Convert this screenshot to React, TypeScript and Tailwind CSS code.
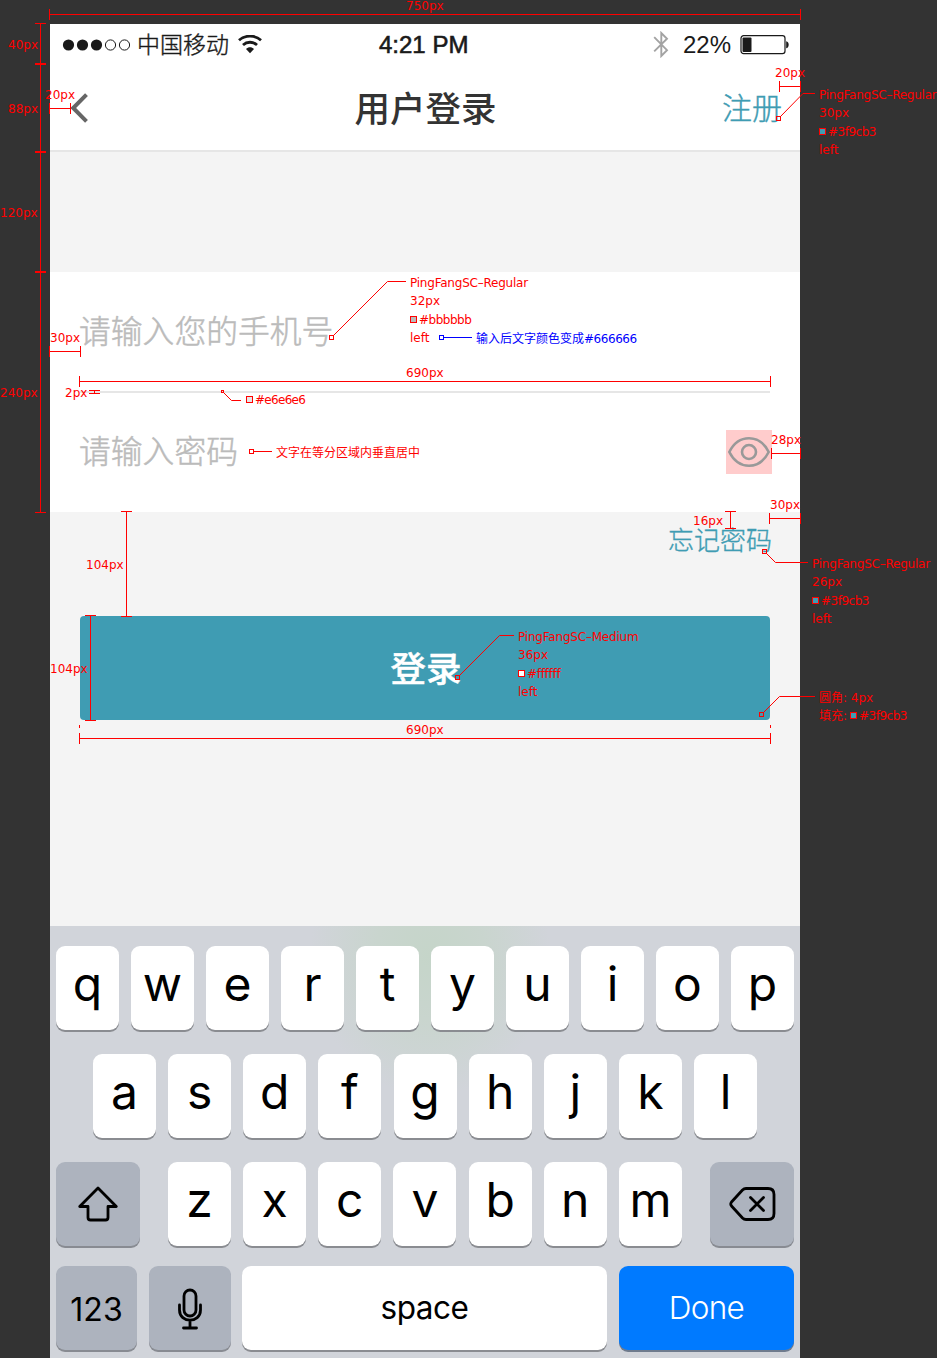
import React from "react";

const SANS = "font-['Inter','Noto_Sans_CJK_SC',sans-serif]";
const CJK = "font-['Noto_Sans_CJK_SC',sans-serif]";
const ARIAL = "font-['Liberation_Sans',Arial,sans-serif]";

function StatusBar() {
  return (
    <div className="flex h-10 items-center pl-[12px] pr-[10px] text-[#1a1a1a]">
      <div className="flex w-[300px] items-center">
        <svg className="mt-px h-[14px] w-[70px] shrink-0" viewBox="0 0 70 14">
          <circle cx="6.5" cy="7" r="5.6" fill="#1a1a1a" />
          <circle cx="20.5" cy="7" r="5.6" fill="#1a1a1a" />
          <circle cx="34.5" cy="7" r="5.6" fill="#1a1a1a" />
          <circle cx="48.5" cy="7" r="5.1" fill="none" stroke="#1a1a1a" />
          <circle cx="62.5" cy="7" r="5.1" fill="none" stroke="#1a1a1a" />
        </svg>
        <span className={`${CJK} -mt-[3px] ml-[5px] whitespace-nowrap text-[23px] font-light leading-10 [-webkit-text-stroke:0.4px_#1a1a1a]`}>
          中国移动
        </span>
        <svg className="ml-[9px] h-[19px] w-[24px] shrink-0" viewBox="0 0 24 19" fill="none" stroke="#1a1a1a">
          <path d="M1 5.2C7 -.2 17 -.2 23 5.2" strokeWidth="2.8" />
          <path d="M5 10c4-3.700 10-3.700 14 0" strokeWidth="2.8" />
          <path d="M8 14c2.3-2.2 5.7-2.2 8 0L12 18.2z" fill="#1a1a1a" stroke="none" />
        </svg>
      </div>
      <span className={`${ARIAL} ml-[17px] mt-px w-[90px] whitespace-nowrap text-[24px] leading-10 [-webkit-text-stroke:0.6px_#1a1a1a]`}>
        4:21 PM
      </span>
      <div className="ml-auto flex items-center">
        <svg className="h-[27px] w-[16px]" viewBox="0 0 16 27" fill="none" stroke="#a3a3a3" strokeWidth="1.9">
          <path d="M1.2 6.2 14 19.2 8.3 25V2L14 7.8 1.2 20.4" />
        </svg>
        <span className={`${ARIAL} ml-[14px] mt-px w-[48px] text-[24px] leading-10`}>22%</span>
        <svg className="ml-[9px] mt-px h-[20px] w-[50px]" viewBox="0 0 50 20">
          <rect x="1" y=".7" width="44" height="18" rx="2.6" fill="none" stroke="#1a1a1a" strokeWidth="1.2" />
          <rect x="2.5" y="2.5" width="9" height="14.5" rx="1" fill="#1a1a1a" />
          <path d="M46.2 6.2c3.3.5 3.3 6.600 0 7.100z" fill="#1a1a1a" />
        </svg>
      </div>
    </div>
  );
}

function NavBar() {
  return (
    <div className={`${CJK} grid h-[88px] grid-cols-3 items-center border-b-2 border-[#e6e6e6] pl-5 pr-[18px]`}>
      <svg className="mt-px h-[30px] w-[19px]" viewBox="0 0 19 30" fill="none" stroke="#666" strokeWidth="4">
        <path d="M16.500 1.600 3.200 15 16.500 28.400" />
      </svg>
      <h1 className="-ml-px whitespace-nowrap text-center text-[35.5px] font-medium leading-none text-[#333]">用户登录</h1>
      <a className="-mt-[2px] text-right text-[30px] font-light leading-none text-[#3f9cb3] [-webkit-text-stroke:0.4px_#3f9cb3]">注册</a>
    </div>
  );
}

function LoginForm() {
  return (
    <div className={`${CJK} h-[240px] bg-white px-[30px] text-[31.8px] font-light text-[#bbb] [-webkit-text-stroke:0.5px_#bbb]`}>
      <div className="flex h-[121px] items-center border-b-2 border-[#e6e6e6] pb-[4px]">
        <span className="-ml-px">请输入您的手机号</span>
      </div>
      <div className="-mr-[2px] flex h-[119px] items-center justify-between">
        <span className="-ml-px -mt-[5px]">请输入密码</span>
        <span className="-mt-px flex h-[44px] w-[46px] items-center justify-center bg-[#fcc]">
          <svg className="h-[32px] w-[44px]" viewBox="0 0 44 32" fill="none" stroke="#999" strokeWidth="2.6" strokeLinejoin="round">
            <path d="M2.300 16C11.500-2.300 32.500-2.300 41.700 16 32.500 34.300 11.500 34.300 2.300 16Z" />
            <circle cx="22" cy="16" r="7" />
          </svg>
        </span>
      </div>
    </div>
  );
}

function LetterKey({ label }: { label: string }) {
  return (
    <div className="flex h-[84px] w-[63px] justify-center rounded-[9px] bg-white text-[48px] font-[380] leading-[75px] text-black shadow-[0_2px_0_#8a8c91]">
      {label}
    </div>
  );
}

const GREY_KEY =
  "flex h-[84px] items-center justify-center rounded-[9px] bg-[#adb3be] text-black shadow-[0_2px_0_#888b92]";

function Keyboard() {
  return (
    <div
      className={`${SANS} h-[432px] overflow-hidden bg-[#d1d4da] bg-[radial-gradient(ellipse_120px_140px_at_380px_30px,#c5d5c9_0%,#c9d5ce_45%,#d1d4da_100%)] px-[6px] pt-5`}
    >
      <div className="flex h-[108px] justify-between">
        {"qwertyuiop".split("").map((k) => (
          <LetterKey key={k} label={k} />
        ))}
      </div>
      <div className="flex h-[108px] justify-between px-[37px]">
        {"asdfghjkl".split("").map((k) => (
          <LetterKey key={k} label={k} />
        ))}
      </div>
      <div className="flex h-[104px] justify-between">
        <div className={`${GREY_KEY} w-[84px]`}>
          <svg className="h-[38px] w-[42px]" viewBox="0 0 42 38" fill="none" stroke="#000" strokeWidth="2.800" strokeLinejoin="round">
            <path d="M21 3 39.300 21.500H31V32.500Q31 35 28.500 35H13.500Q11 35 11 32.500V21.500H2.700Z" />
          </svg>
        </div>
        <div className="flex w-[514px] justify-between">
          {"zxcvbnm".split("").map((k) => (
            <LetterKey key={k} label={k} />
          ))}
        </div>
        <div className={`${GREY_KEY} w-[84px]`}>
          <svg className="h-[36px] w-[48px]" viewBox="0 0 48 36" fill="none" stroke="#000" strokeWidth="2.800" strokeLinejoin="round" strokeLinecap="round">
            <path d="M18 2.500H40Q46 2.500 46 8.500V27.500Q46 33.500 40 33.500H18Q16 33.500 14.500 32L3.500 20Q2 18 3.500 16L14.500 4Q16 2.500 18 2.500Z" />
            <path d="M22.500 11.500 35.500 24.500M35.500 11.500 22.500 24.500" />
          </svg>
        </div>
      </div>
      <div className="flex">
        <div className={`${GREY_KEY} w-[81px] pt-[3px] text-[32px] font-[380]`}>123</div>
        <div className={`${GREY_KEY} ml-3 w-[82px]`}>
          <svg className="mt-px h-[42px] w-[26px]" viewBox="0 0 26 42" fill="none" stroke="#000" strokeWidth="2.800" strokeLinecap="round">
            <rect x="7" y="2" width="12" height="26" rx="6" />
            <path d="M2.500 17v5c0 13.500 21 13.500 21 0v-5M13 33v7M6.500 40h13" />
          </svg>
        </div>
        <div className="ml-[11px] flex h-[84px] w-[365px] items-center justify-center rounded-[9px] bg-white text-[31.500px] font-[380] tracking-[-0.5px] text-black shadow-[0_2px_0_#8a8c91]">
          space
        </div>
        <div className="ml-3 flex h-[84px] w-[175px] items-center justify-center rounded-[9px] bg-[#007aff] text-[31.500px] font-[350] tracking-[-0.7px] text-white shadow-[0_2px_0_#6f7b8d]">
          Done
        </div>
      </div>
    </div>
  );
}

const NOTES: [string, string][] = [
  ["750px", "left-[406px] top-[-1px]"],
  ["40px", "left-[8px] top-[38px]"],
  ["88px", "left-[8px] top-[102px]"],
  ["20px", "left-[45px] top-[88px]"],
  ["120px", "left-0 top-[206px]"],
  ["240px", "left-0 top-[386px]"],
  ["20px", "left-[775px] top-[66px]"],
  ["PingFangSC–Regular", "left-[819px] top-[88px] tracking-[-0.25px]"],
  ["30px", "left-[819px] top-[106px]"],
  ["#3f9cb3", "left-[828px] top-[125px] tracking-[-0.5px]"],
  ["left", "left-[819px] top-[143px]"],
  ["PingFangSC–Regular", "left-[410px] top-[276px] tracking-[-0.22px]"],
  ["32px", "left-[410px] top-[294px]"],
  ["#bbbbbb", "left-[419px] top-[313px] tracking-[-0.5px]"],
  ["left", "left-[410px] top-[331px]"],
  ["30px", "left-[50px] top-[331px]"],
  ["690px", "left-[406px] top-[366px]"],
  ["2px", "left-[65px] top-[386px]"],
  ["#e6e6e6", "left-[255px] top-[393px] tracking-[-0.7px]"],
  ["文字在等分区域内垂直居中", "left-[276px] top-[446px]"],
  ["28px", "left-[771px] top-[433px]"],
  ["30px", "left-[770px] top-[498px]"],
  ["16px", "left-[693px] top-[514px]"],
  ["104px", "left-[86px] top-[558px]"],
  ["104px", "left-[50px] top-[662px]"],
  ["690px", "left-[406px] top-[723px]"],
  ["PingFangSC–Medium", "left-[518px] top-[630px] tracking-[-0.2px]"],
  ["36px", "left-[518px] top-[648px]"],
  ["#ffffff", "left-[527px] top-[667px] tracking-[-0.3px]"],
  ["left", "left-[518px] top-[685px]"],
  ["PingFangSC–Regular", "left-[812px] top-[557px] tracking-[-0.22px]"],
  ["26px", "left-[812px] top-[575px]"],
  ["#3f9cb3", "left-[821px] top-[594px] tracking-[-0.5px]"],
  ["left", "left-[812px] top-[612px]"],
  ["圆角: 4px", "left-[819px] top-[691px]"],
  ["填充:", "left-[819px] top-[709px]"],
  ["#3f9cb3", "left-[859px] top-[709px] tracking-[-0.5px]"],
];

// Horizontal dimension: x1, x2, y
const H_DIMS = [
  [49, 800, 14], [49, 70, 108], [779, 800, 86], [49, 80, 351], [79, 770, 381],
  [771, 800, 453], [769, 800, 518], [79, 770, 738],
];
// Vertical dimension: x, y1, y2
const V_DIMS = [[126, 511, 616], [90, 615, 720], [730, 511, 528], [94, 390, 393]];
// Leader: anchor square x, y, size, then polyline points and colour
const LEADERS: [number, number, number, string, string][] = [
  [776, 116, 5, "781,116 803,93.5 815,93.5", "#f00"],
  [329, 335, 5, "334,335 387.5,281.5 406,281.5", "#f00"],
  [439, 335, 5, "444,337.5 472,337.5", "#00f"],
  [221, 390, 3, "224,393 231.500,400.500 241,400.500", "#f00"],
  [249, 449, 5, "254,451.5 272,451.5", "#f00"],
  [762, 549, 5, "767,554 775.500,562.500 808,562.500", "#f00"],
  [759, 712, 5, "764,712 779.500,696.500 815,696.500", "#f00"],
  [455, 675, 5, "460,675 499.500,635.500 514,635.500", "#f00"],
];
// Colour swatch: x, y, fill
const SWATCHES: [number, number, string][] = [
  [819, 128, "#3f9cb3"], [410, 316, "#bbb"], [246, 396, "#e6e6e6"],
  [518, 670, "#fff"], [812, 597, "#3f9cb3"], [850, 712, "#3f9cb3"],
];

function Annotations() {
  return (
    <div className="pointer-events-none absolute inset-0 overflow-hidden font-['DejaVu_Sans','Noto_Sans_CJK_SC',sans-serif] text-[12px] leading-[14px] text-[#f00]">
      <svg className="absolute inset-0 h-[1358px] w-[937px]" viewBox="0 0 937 1358">
        <g fill="#f00" shapeRendering="crispEdges">
          {H_DIMS.map(([a, b, y]) => (
            <React.Fragment key={`${a}-${y}`}>
              <rect x={a} y={y} width={b - a} height="1" />
              <rect x={a} y={y - 5} width="1" height="11" />
              <rect x={b} y={y - 5} width="1" height="11" />
            </React.Fragment>
          ))}
          {V_DIMS.map(([x, a, b]) => (
            <React.Fragment key={`${x}-${a}`}>
              <rect x={x} y={a} width="1" height={b - a} />
              <rect x={x - 5} y={a} width="11" height="1" />
              <rect x={x - 5} y={b} width="11" height="1" />
            </React.Fragment>
          ))}
          <rect x="40" y="23" width="1" height="489" />
          <rect x="35" y="23" width="11" height="1" />
          <rect x="35" y="63" width="11" height="2" />
          <rect x="35" y="151" width="11" height="2" />
          <rect x="35" y="271" width="11" height="2" />
          <rect x="35" y="512" width="11" height="1" />
          <rect x="79" y="725" width="1" height="3" />
          <rect x="770" y="725" width="1" height="3" />
        </g>
        {LEADERS.map(([x, y, s, pts, c]) => (
          <g key={pts} fill="none" stroke={c}>
            <rect x={x + 0.5} y={y + 0.5} width={s - 1} height={s - 1} />
            <polyline points={pts} />
          </g>
        ))}
        {SWATCHES.map(([x, y, f]) => (
          <rect key={`${x}-${y}`} x={x + 0.5} y={y + 0.5} width="6" height="6" fill={f} stroke="#f00" />
        ))}
      </svg>
      {NOTES.map(([t, pos]) => (
        <span key={pos} className={`absolute whitespace-nowrap ${pos}`}>
          {t}
        </span>
      ))}
      <span className="absolute left-[476px] top-[332px] whitespace-nowrap text-[#00f]">
        输入后文字颜色变成<span className="tracking-[-0.45px]">#666666</span>
      </span>
    </div>
  );
}

export default function App() {
  return (
    <div className="relative h-[1358px] w-[937px] overflow-hidden bg-[#333] pl-[50px] pt-6">
      <div className="w-[750px] bg-[#f4f4f4]">
        <header className="bg-white">
          <StatusBar />
          <NavBar />
        </header>
        <main className="h-[774px] pt-[120px]">
          <LoginForm />
          <div className={`${CJK} flex h-[104px] justify-end pr-[28px] pt-[14px]`}>
            <a className="text-[26px] font-light leading-[26px] text-[#3f9cb3] [-webkit-text-stroke:0.35px_#3f9cb3]">忘记密码</a>
          </div>
          <button className={`${CJK} mx-[30px] block h-[104px] w-[690px] rounded-[4px] bg-[#3f9cb3] pb-[3px] pl-[2px] text-[35.500px] font-medium text-white [-webkit-text-stroke:0.4px_#fff]`}>
            登录
          </button>
        </main>
        <Keyboard />
      </div>
      <Annotations />
    </div>
  );
}
